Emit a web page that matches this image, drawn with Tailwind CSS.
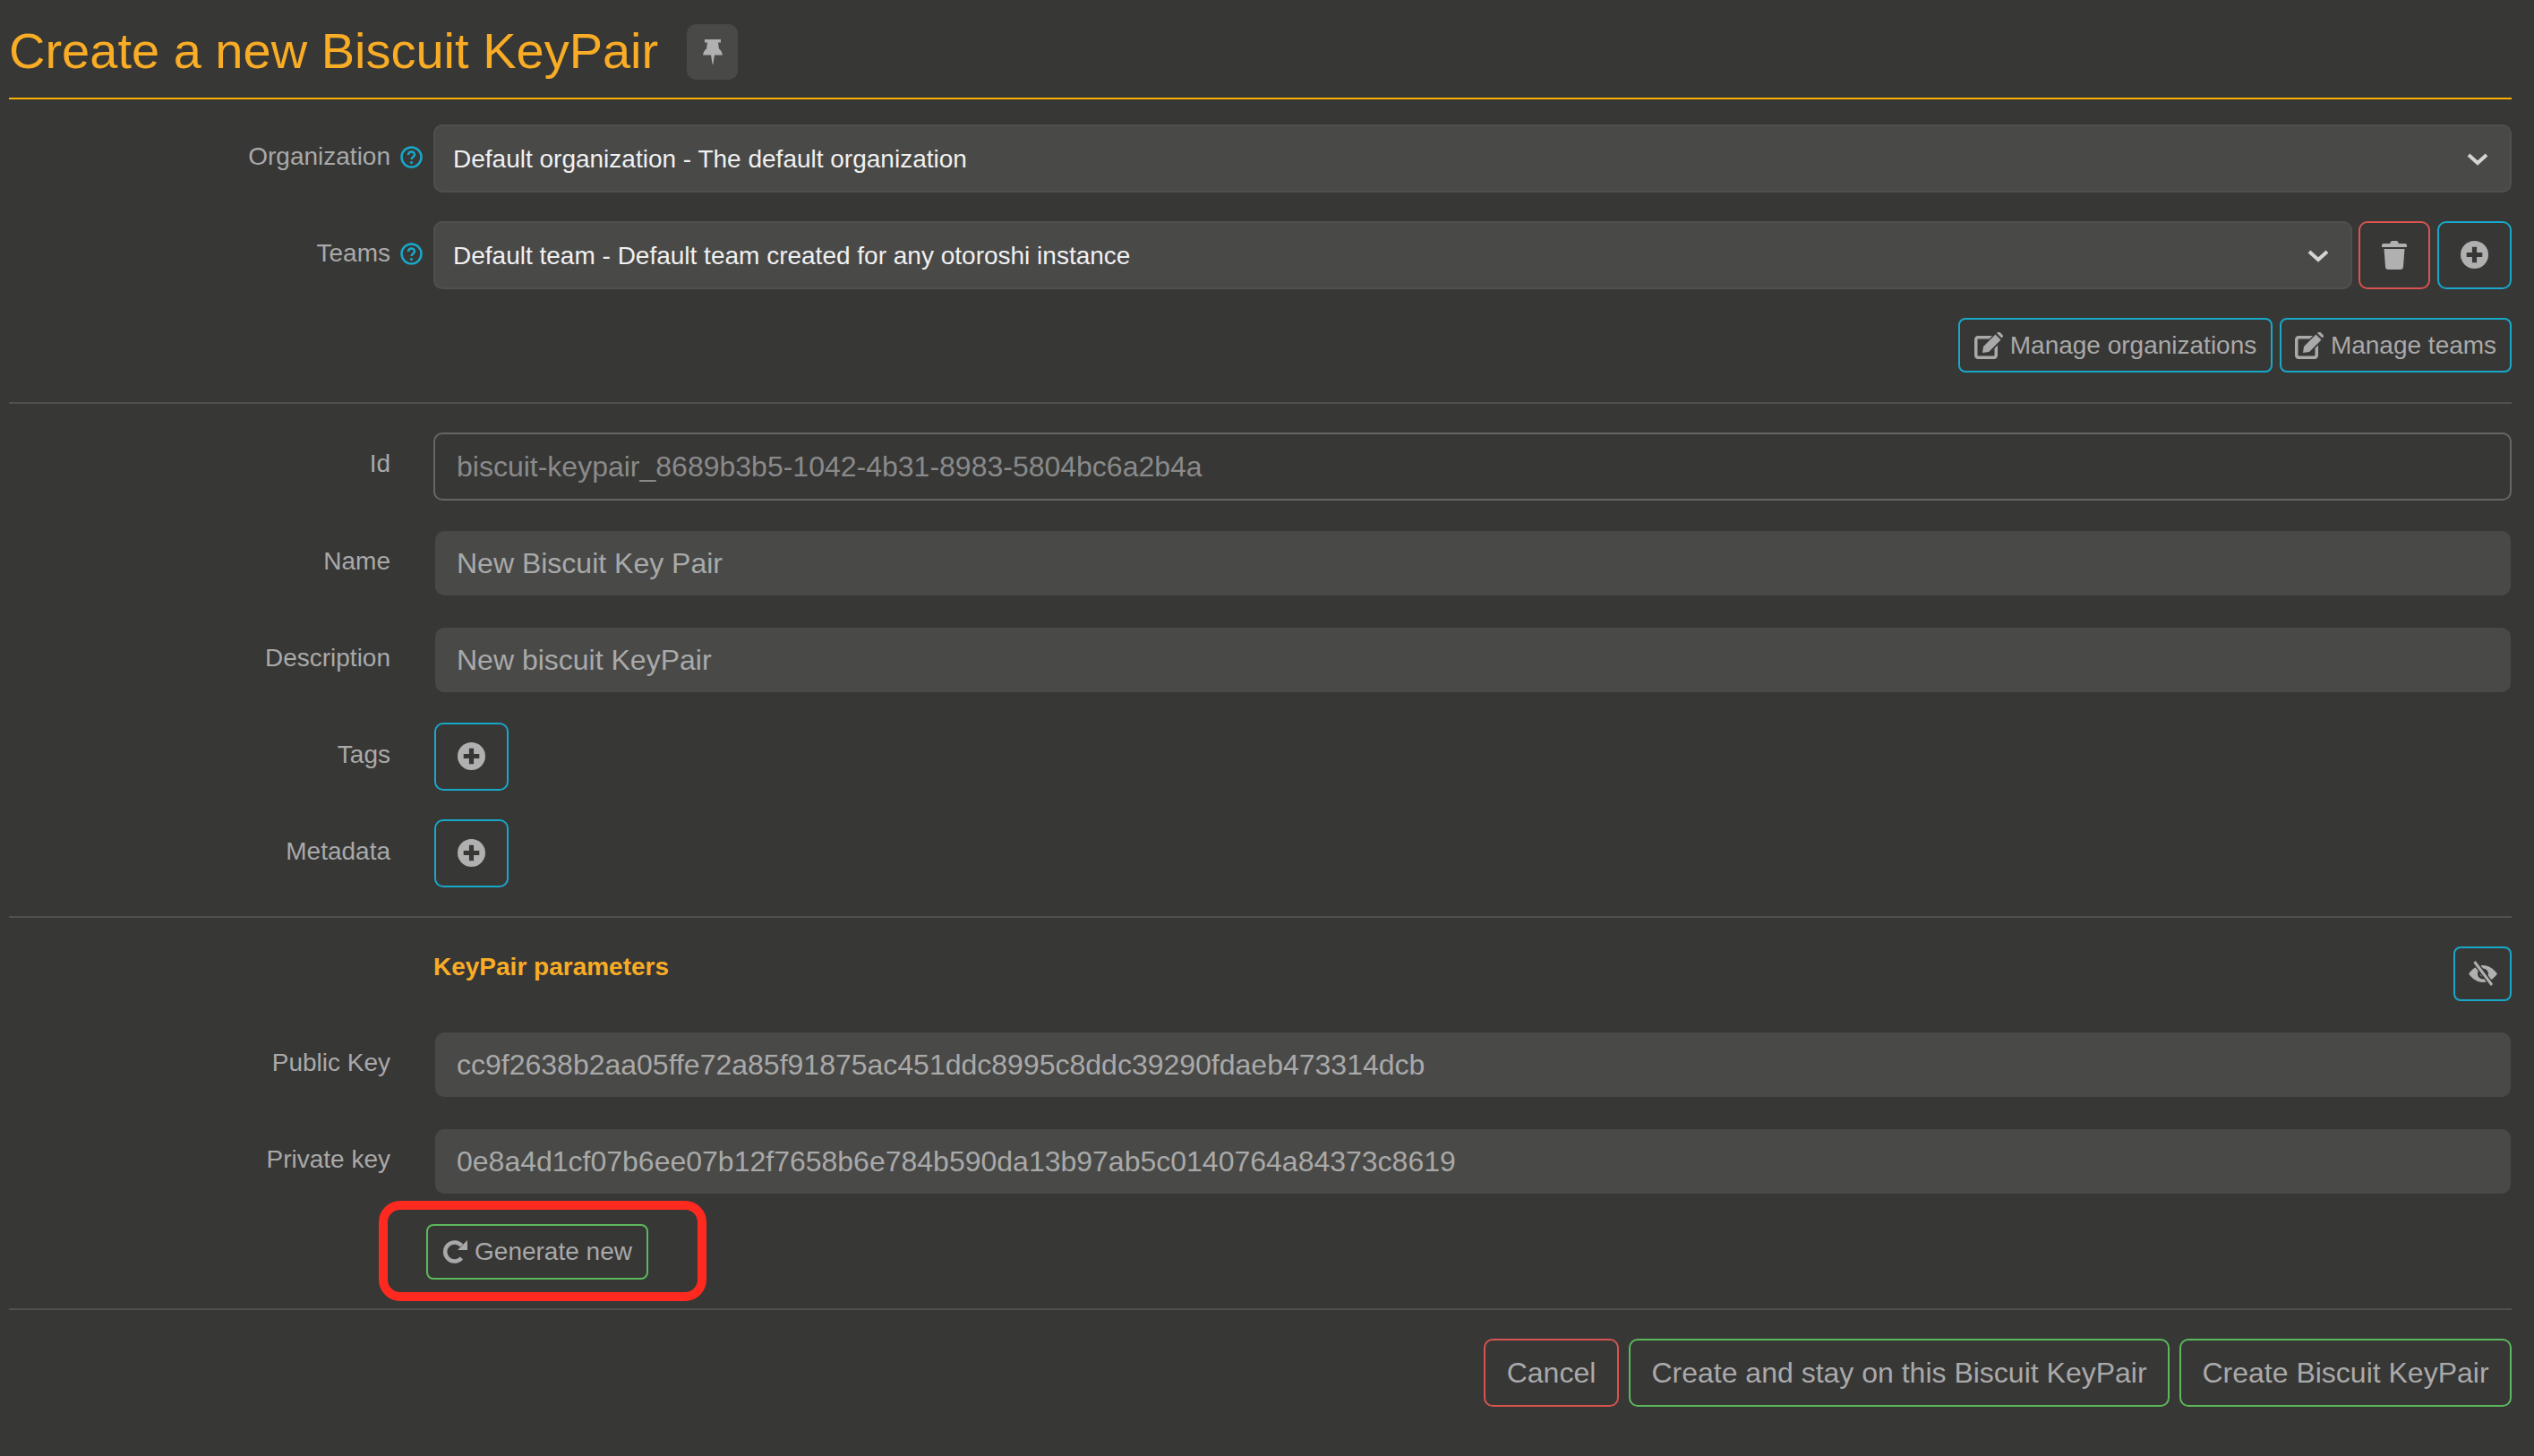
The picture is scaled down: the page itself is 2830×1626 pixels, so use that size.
<!DOCTYPE html>
<html lang="en">
<head>
    <meta charset="UTF-8">
    <title>Create a new Biscuit KeyPair</title>
    <script src="https://cdn.jsdelivr.net/npm/@tailwindcss/browser@4"></script>
</head>
<body class="bg-[#373736] font-['Liberation_Sans',Arial,sans-serif] text-[28px] text-[#a9a9a9] min-h-screen">
<div class="relative pl-[10px] pr-[25px] h-[1626px]">
    <!-- Title -->
    <div class="flex items-start h-[111px] border-b-2 border-[#f9b000]">
        <h1 class="mt-[23px] text-[56px] leading-[68px] text-[#f9ac25]">Create a new Biscuit KeyPair</h1>
        <button class="ml-[32px] mt-[27px] w-[57px] h-[62px] rounded-[10px] bg-[#494948] flex items-center justify-center">
            <svg class="w-[22px] h-[28px]" viewBox="0 0 22 28" fill="#b0b0b0"><path d="M2 0h18v3.500h-3l1 7c2 1.500 3.500 3.500 4 7H0c.5-3.500 2-5.500 4-7l1-7H2zM9 17.500h4L11.300 28h-.6z"/></svg>
        </button>
    </div>

    <!-- Organization -->
    <div class="flex mt-[28px]">
        <div class="w-[462px] shrink-0 flex justify-end items-center h-[72px]">
            <span>Organization</span>
            <svg class="w-[25px] h-[25px] ml-[11px]" viewBox="0 0 25 25" fill="none"><circle cx="12.500" cy="12.500" r="11" stroke="#18a8c9" stroke-width="2.500"/><path d="M9 10c0-2 1.500-3.500 3.500-3.500S16 8 16 10s-3.500 2.500-3.500 5" stroke="#18a8c9" stroke-width="2.500"/><circle cx="12.500" cy="18.500" r="1.600" fill="#18a8c9"/></svg>
        </div>
        <div class="ml-[12px] flex-1 h-[76px] pt-[1px] rounded-[10px] border-2 border-[#505050] bg-[#494948] flex items-center justify-between pl-[20px] pr-[24px] text-[#f0f0f0]">
            <span>Default organization - The default organization</span>
            <svg class="w-[24px] h-[15px]" viewBox="0 0 24 15" fill="none"><path d="M2 3l10 9 10-9" stroke="#d4d4d4" stroke-width="4"/></svg>
        </div>
    </div>

    <!-- Teams -->
    <div class="flex mt-[32px]">
        <div class="w-[462px] shrink-0 flex justify-end items-center h-[72px]">
            <span>Teams</span>
            <svg class="w-[25px] h-[25px] ml-[11px]" viewBox="0 0 25 25" fill="none"><circle cx="12.500" cy="12.500" r="11" stroke="#18a8c9" stroke-width="2.500"/><path d="M9 10c0-2 1.500-3.500 3.500-3.500S16 8 16 10s-3.500 2.500-3.500 5" stroke="#18a8c9" stroke-width="2.500"/><circle cx="12.500" cy="18.500" r="1.600" fill="#18a8c9"/></svg>
        </div>
        <div class="ml-[12px] flex-1 h-[76px] pt-[1px] rounded-[10px] border-2 border-[#505050] bg-[#494948] flex items-center justify-between pl-[20px] pr-[24px] text-[#f0f0f0]">
            <span>Default team - Default team created for any otoroshi instance</span>
            <svg class="w-[24px] h-[15px]" viewBox="0 0 24 15" fill="none"><path d="M2 3l10 9 10-9" stroke="#d4d4d4" stroke-width="4"/></svg>
        </div>
        <button class="ml-[7px] w-[80px] h-[76px] rounded-[10px] border-2 border-[#d9534f] flex items-center justify-center">
            <svg class="w-[28px] h-[32px]" viewBox="0 0 28 32" fill="#b0b0b0"><path d="M0 5c0-1 .5-2 2-2h7l1-2c.3-.6 1-1 1.500-1h5c.5 0 1.200.4 1.500 1l1 2h7c1.500 0 2 1 2 2v2H0zM2.500 9h23L24 29c-.1 1.700-1.300 3-3 3H7c-1.700 0-2.900-1.300-3-3z"/></svg>
        </button>
        <button class="ml-[8px] w-[83px] h-[76px] pb-[2px] rounded-[10px] border-2 border-[#18a8c9] flex items-center justify-center">
            <svg class="w-[31px] h-[31px]" viewBox="0 0 30 30"><circle cx="15" cy="15" r="15" fill="#b0b0b0"/><path d="M12.500 6.500h5v6h6v5h-6v6h-5v-6h-6v-5h6z" fill="#373736"/></svg>
        </button>
    </div>

    <!-- Manage -->
    <div class="flex justify-end gap-[8px] mt-[32px]">
        <button class="h-[61px] w-[351px] pt-[1px] rounded-[8px] border-2 border-[#18a8c9] flex items-center justify-center gap-[8px]">
            <svg class="w-[32px] h-[30px]" viewBox="0 0 32 30" fill="#a9a9a9"><path d="M4 4h16l-3.500 3.500H4.500c-.6 0-1 .4-1 1v17c0 .6.4 1 1 1h17c.6 0 1-.4 1-1V18l3.500-3.500V26c0 2.200-1.800 4-4 4H4c-2.200 0-4-1.800-4-4V8c0-2.200 1.800-4 4-4zM10 16L23.500 2.500l6 6L16 22l-7 1zM25 1l1-1c.8-.6 1.800-.6 2.500 0l3 3c.6.700.6 1.700 0 2.500l-1 1z"/></svg>
            <span>Manage organizations</span>
        </button>
        <button class="h-[61px] w-[259px] pt-[1px] rounded-[8px] border-2 border-[#18a8c9] flex items-center justify-center gap-[8px]">
            <svg class="w-[32px] h-[30px]" viewBox="0 0 32 30" fill="#a9a9a9"><path d="M4 4h16l-3.500 3.500H4.500c-.6 0-1 .4-1 1v17c0 .6.4 1 1 1h17c.6 0 1-.4 1-1V18l3.500-3.500V26c0 2.200-1.800 4-4 4H4c-2.200 0-4-1.800-4-4V8c0-2.200 1.800-4 4-4zM10 16L23.500 2.500l6 6L16 22l-7 1zM25 1l1-1c.8-.6 1.800-.6 2.500 0l3 3c.6.700.6 1.700 0 2.500l-1 1z"/></svg>
            <span>Manage teams</span>
        </button>
    </div>

    <div class="mt-[33px] h-[2px] bg-[#505050]"></div>

    <!-- Id -->
    <div class="flex mt-[32px]">
        <div class="w-[426px] shrink-0 text-right h-[69px] leading-[69px]">Id</div>
        <div class="ml-[48px] flex-1 h-[76px] rounded-[10px] border-2 border-[#666666] flex items-center pl-[24px] text-[32px] text-[#8a8a8a]">biscuit-keypair_8689b3b5-1042-4b31-8983-5804bc6a2b4a</div>
    </div>

    <!-- Name -->
    <div class="flex mt-[34px]">
        <div class="w-[426px] shrink-0 text-right h-[68px] leading-[68px]">Name</div>
        <div class="ml-[50px] mr-[1px] flex-1 h-[72px] rounded-[10px] bg-[#494948] flex items-center pl-[24px] text-[32px]">New Biscuit Key Pair</div>
    </div>

    <!-- Description -->
    <div class="flex mt-[36px]">
        <div class="w-[426px] shrink-0 text-right h-[68px] leading-[68px]">Description</div>
        <div class="ml-[50px] mr-[1px] flex-1 h-[72px] rounded-[10px] bg-[#494948] flex items-center pl-[24px] text-[32px]">New biscuit KeyPair</div>
    </div>

    <!-- Tags -->
    <div class="flex mt-[34px]">
        <div class="w-[426px] shrink-0 text-right h-[71px] leading-[71px]">Tags</div>
        <button class="ml-[49px] w-[83px] h-[76px] pb-[2px] rounded-[10px] border-2 border-[#18a8c9] flex items-center justify-center">
            <svg class="w-[31px] h-[31px]" viewBox="0 0 30 30"><circle cx="15" cy="15" r="15" fill="#b0b0b0"/><path d="M12.500 6.500h5v6h6v5h-6v6h-5v-6h-6v-5h6z" fill="#373736"/></svg>
        </button>
    </div>

    <!-- Metadata -->
    <div class="flex mt-[32px]">
        <div class="w-[426px] shrink-0 text-right h-[71px] leading-[71px]">Metadata</div>
        <button class="ml-[49px] w-[83px] h-[76px] pb-[2px] rounded-[10px] border-2 border-[#18a8c9] flex items-center justify-center">
            <svg class="w-[31px] h-[31px]" viewBox="0 0 30 30"><circle cx="15" cy="15" r="15" fill="#b0b0b0"/><path d="M12.500 6.500h5v6h6v5h-6v6h-5v-6h-6v-5h6z" fill="#373736"/></svg>
        </button>
    </div>

    <div class="mt-[32px] h-[2px] bg-[#505050]"></div>

    <!-- KeyPair parameters -->
    <div class="flex justify-between mt-[32px] pl-[474px]">
        <div class="font-bold text-[#f9ac25] leading-[46px]">KeyPair parameters</div>
        <button class="w-[65px] h-[61px] rounded-[8px] border-2 border-[#18a8c9] flex items-center justify-center">
            <svg class="w-[32px] h-[29px]" viewBox="0 0 32 29">
                <path fill-rule="evenodd" d="M16 5c6.500 0 12 4 16 9.500C28 20 22.500 24 16 24S4 20 0 14.500C4 9 9.500 5 16 5zM16 8.500a6 6 0 1 0 0 12 6 6 0 0 0 0-12z" fill="#b0b0b0"/>
                <circle cx="16" cy="14.500" r="3" fill="#b0b0b0"/>
                <path d="M6.500 1L26 27" stroke="#373736" stroke-width="6"/>
                <path d="M6.500 1L26 27" stroke="#b0b0b0" stroke-width="3"/>
            </svg>
        </button>
    </div>

    <!-- Public Key -->
    <div class="flex mt-[35px]">
        <div class="w-[426px] shrink-0 text-right h-[68px] leading-[68px]">Public Key</div>
        <div class="ml-[50px] mr-[1px] flex-1 h-[72px] rounded-[10px] bg-[#494948] flex items-center pl-[24px] text-[32px]">cc9f2638b2aa05ffe72a85f91875ac451ddc8995c8ddc39290fdaeb473314dcb</div>
    </div>

    <!-- Private key -->
    <div class="flex mt-[36px]">
        <div class="w-[426px] shrink-0 text-right h-[68px] leading-[68px]">Private key</div>
        <div class="ml-[50px] mr-[1px] flex-1 h-[72px] rounded-[10px] bg-[#494948] flex items-center pl-[24px] text-[32px]">0e8a4d1cf07b6ee07b12f7658b6e784b590da13b97ab5c0140764a84373c8619</div>
    </div>

    <!-- Generate new -->
    <div class="mt-[34px] ml-[466px]">
        <button class="h-[62px] w-[248px] rounded-[8px] border-2 border-[#5cb85c] flex items-center justify-center gap-[8px]">
            <svg class="w-[28px] h-[28px]" viewBox="0 0 28 28" fill="none"><path d="M21.500 7A10.500 10.500 0 1 0 21.500 21" stroke="#a9a9a9" stroke-width="4.500"/><path d="M28 1v11H17z" fill="#a9a9a9"/></svg>
            <span>Generate new</span>
        </button>
    </div>

    <div class="mt-[32px] h-[2px] bg-[#505050]"></div>

    <!-- Footer -->
    <div class="flex justify-end gap-[11px] mt-[32px] text-[32px]">
        <button class="h-[76px] w-[151px] rounded-[10px] border-2 border-[#d9534f]">Cancel</button>
        <button class="h-[76px] w-[604px] rounded-[10px] border-2 border-[#5cb85c]">Create and stay on this Biscuit KeyPair</button>
        <button class="h-[76px] w-[371px] rounded-[10px] border-2 border-[#5cb85c]">Create Biscuit KeyPair</button>
    </div>

    <!-- Red annotation round the generate button -->
    <div class="absolute left-[423px] top-[1341px] w-[366px] h-[112px] rounded-[24px] border-[10px] border-[#ff2a1f]"></div>
</div>
</body>
</html>
